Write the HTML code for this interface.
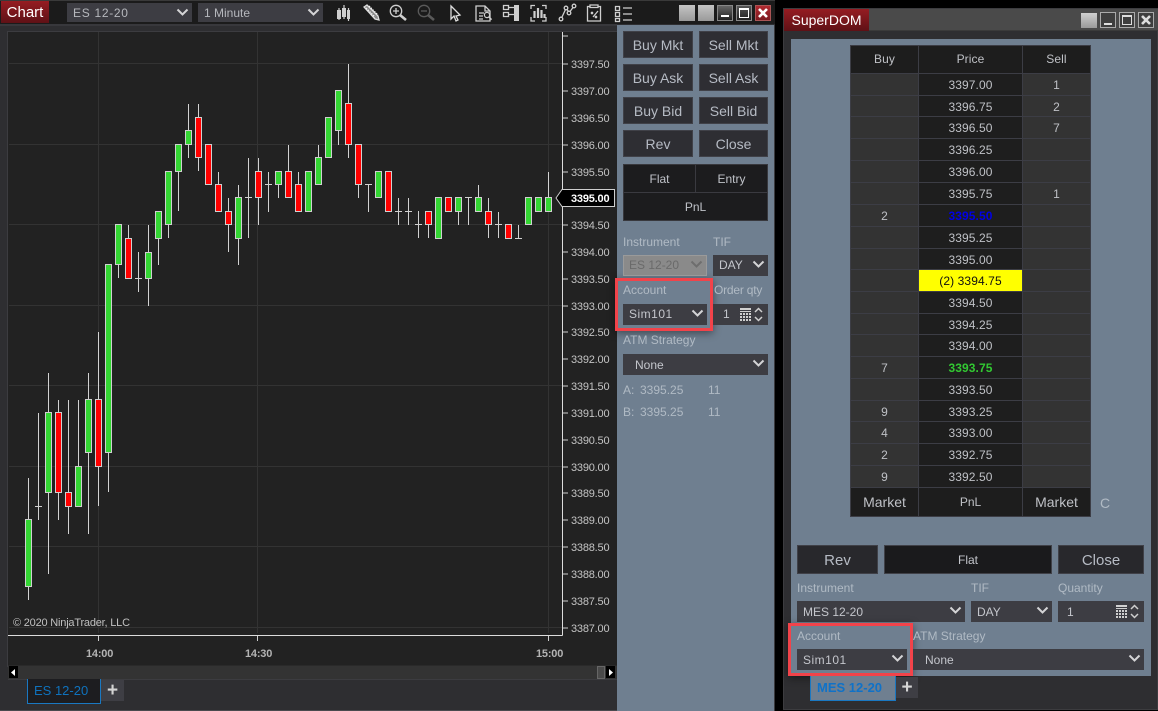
<!DOCTYPE html>
<html><head><meta charset="utf-8"><style>
html,body{margin:0;padding:0;background:#000}
body{position:relative;width:1158px;height:711px;overflow:hidden;font-family:"Liberation Sans",sans-serif;font-size:12px;color:#b9bdc4}
div,span{box-sizing:border-box}
.a{position:absolute}
.t{position:absolute;white-space:nowrap;line-height:16px;height:16px}
.lab{color:#b0bac4;font-size:12px}
.ax{position:absolute;left:571px;margin-top:1px;font-size:11px;letter-spacing:-.2px;line-height:14px;color:#c4c4c4}
.btn{position:absolute;background:#2e2e33;border:1px solid #404148;color:#b6bbc4;font-size:14px;text-align:center;line-height:26px;height:27px}
.sel{position:absolute;background:#3d3d43;color:#c4c6cc;height:21px;line-height:21px;padding-left:6px;font-size:12px}
.sel svg{position:absolute;right:3px;top:5px}
.grid{position:absolute;left:850px;top:45px;width:241px;display:grid;background:#3c3d45;border:1px solid #3c3d45;grid-template-columns:67px 103px 67px;column-gap:1px;row-gap:1px;grid-template-rows:27px 21px 20px 21px 21px 21px 21px 21px 21px 20px 21px 21px 20px 21px 21px 21px 20px 21px 21px 21px 28px}
.grid div{text-align:center;font-size:12px;letter-spacing:.1px;line-height:22px;color:#bfc1c6;background:#333}
.grid div.p{background:#1e1e1e}
.grid div.h{background:#1d1d1d;line-height:26px}
.grid div.m{background:#1d1d1d;font-size:14px;line-height:29px;letter-spacing:0}
.hl{position:absolute;border:3px solid #f2434a;box-shadow:0 2px 8px rgba(0,0,0,.45)}
.time{color:#b4b4b4;font-weight:bold;font-size:11px;letter-spacing:-.2px;top:646px}
</style></head><body>

<!-- CHART WINDOW -->
<div class="a" style="left:0;top:0;width:775px;height:711px;background:#2e2e31;border-bottom:1px solid #4a4a4e"></div>
<div class="a" style="left:0;top:0;width:775px;height:24px;background:#1b1b1b;border-top:1px solid #3a3a3a"></div>
<div class="a" style="left:0;top:24px;width:617px;height:2px;background:#38383c"></div>
<div class="a" style="left:1px;top:1px;width:48px;height:22px;background:linear-gradient(#951c22,#5f1116);color:#fff;font-size:15px;line-height:24px;text-align:center">Chart</div>
<div class="sel" style="left:67px;top:3px;width:125px;height:19px;line-height:21px;color:#b6b8bd;letter-spacing:.7px"><span>ES 12-20</span><svg width="13" height="9" style="top:5px"><path d="M1.500 1.500l5 5 5-5" fill="none" stroke="#d4d4d6" stroke-width="2"/></svg></div>
<div class="sel" style="left:198px;top:3px;width:125px;height:19px;line-height:21px;color:#b6b8bd"><span>1 Minute</span><svg width="13" height="9" style="top:5px"><path d="M1.500 1.500l5 5 5-5" fill="none" stroke="#d4d4d6" stroke-width="2"/></svg></div>

<!-- toolbar icons -->
<svg class="a" style="left:330px;top:0" width="310" height="24" fill="none" stroke="#cfcfcf" stroke-width="1.3">
<path d="M9 8v12M14 5v14M18.500 8v13" stroke-width="1.200"/><path d="M7 10h4v9H7zM12 8h4v9h-4zM17 10h3v9h-3z" fill="#cfcfcf" stroke="none"/>
<path d="M34 7l3-2 11 11 1 4-4-1z" fill="#888" stroke="#ddd"/><path d="M36 8l9 9M39 6l9 9" stroke="#eee" stroke-dasharray="1.500 1"/>
<circle cx="66" cy="11" r="5.700"/><path d="M63 11h6M66 8v6"/><path d="M70 15l6 5" stroke-width="2.600"/>
<g stroke="#5a5a5a"><circle cx="94" cy="11" r="5.700"/><path d="M91 11h6"/><path d="M98 15l6 5" stroke-width="2.600"/></g>
<path d="M121 6l0 13 3-3 2 5 2-1-2-4 4-1z" stroke="#ddd"/>
<path d="M146 6h9l5 5v10h-14zM155 6v5h5M149 13h5M149 16h4M149 19h4"/><circle cx="157" cy="15" r="2.600" stroke-width="1.200"/><path d="M159 17l2.600 2.600" stroke-width="1.500"/>
<path d="M173.500 5.500h5v4h-5zM173.500 12.500h5v4h-5zM178 7.500h6M178 14.500h6"/><path d="M184 5h5v16h-5z" fill="#cfcfcf" stroke="none"/>
<path d="M201 9V5.500h4M212 5.500h4V9M201 17v4h4M212 21h4v-4"/><path d="M204.500 11v7M208 8v10M211.500 10v8M214.500 14v4" stroke-width="2.200"/>
<circle cx="231" cy="19" r="1.800"/><circle cx="236" cy="8" r="1.800"/><circle cx="239" cy="13" r="1.800"/><circle cx="244" cy="6" r="1.800"/><path d="M232 17l3.500-7.500M237 9.500l1.500 2M240 11.500l3-4"/>
<path d="M260 6.500h-2.500v14.500h13v-14.500h-2.500M260 5h8v2.500h-8zM261 12l2 2M263 12l-2 2M265 16l2 2M267 16l-2 2M263 17l5-6"/>
<path d="M285.500 6.500h4v4h-4zM285.500 12.500h4v4h-4zM285.500 18.500h4v3h-4zM293 8h9M293 14h9M293 20h9"/>
</svg>
<!-- window buttons -->
<div class="a" style="left:679px;top:5px;width:16px;height:16px;background:linear-gradient(#c4c4c4,#9a9a9a)"></div>
<div class="a" style="left:698px;top:5px;width:16px;height:16px;background:linear-gradient(#c4c4c4,#9a9a9a)"></div>
<div class="a" style="left:717px;top:5px;width:16px;height:16px;background:linear-gradient(#666,#222);border:1px solid #888"><div class="a" style="left:3px;top:9px;width:8px;height:2px;background:#fff"></div></div>
<div class="a" style="left:736px;top:5px;width:16px;height:16px;background:linear-gradient(#555,#222);border:1px solid #888"><div class="a" style="left:2px;top:2px;width:10px;height:10px;border:1px solid #fff;border-top-width:2px"></div></div>
<div class="a" style="left:755px;top:5px;width:16px;height:16px;background:linear-gradient(#b02a30,#7c1a20);border:1px solid #a55"><svg width="14" height="14" class="a" style="left:0;top:0"><path d="M3 3l8 8M11 3l-8 8" stroke="#fff" stroke-width="2.600"/></svg></div>

<!-- chart area -->
<div class="a" style="left:7px;top:31px;width:610px;height:636px;background:#222;border-left:1px solid #3c3c40;border-top:1px solid #3c3c40"></div>
<svg class="a" style="left:0;top:0" width="620" height="670" fill="none">
<path d="M9 63.500H562M9 144.500H562M9 224.500H562M9 305.500H562M9 385.500H562M9 466.500H562M9 546.500H562M9 627.500H562M98.500 32V633M257.500 32V633M548.500 32V633" stroke="#333"/>
<path d="M562.500 32V635.500M8 635.500H562.500" stroke="#dcdcdc"/>
<path d="M98.500 636v5M257.500 636v5M548.500 636v5M563 36h5M563 64h5M563 91h5M563 118h5M563 145h5M563 172h5M563 225h5M563 252h5M563 279h5M563 306h5M563 332h5M563 359h5M563 386h5M563 413h5M563 440h5M563 467h5M563 493h5M563 520h5M563 547h5M563 574h5M563 601h5M563 628h5" stroke="#cfcfcf"/>
<path stroke="#d2d2d2" d="M28.500 478V600M38.500 413V520M35 506.500h7M48.500 373V574M58.500 400V520M68.500 400V534M78.500 400V506M88.500 373V534M98.500 332V506M108.500 264V492M118.500 224V278M128.500 225V278M138.500 252V292M135 278.500h7M148.500 225V306M158.500 211V265M168.500 171V238M178.500 144V211M188.500 104V158M198.500 104V171M218.500 172V211M228.500 198V252M238.500 185V265M248.500 158V238M245 197.500h7M258.500 158V225M268.500 172V212M265 184.500h7M278.500 171V198M288.500 145V197M298.500 172V211M318.500 145V184M338.500 90V145M348.500 64V158M358.500 144V198M368.500 184V212M365 184.500h7M398.500 198V225M395 211.500h7M408.500 198V225M405 211.500h7M418.500 211V238M415 224.500h7M428.500 211V238M458.500 197V225M468.500 197V225M465 197.500h7M478.500 185V211M488.500 198V238M498.500 212V238M495 224.500h7M518.500 225V238M515 238.500h7M548.500 172V211"/>
<path fill="#33d633" stroke="#d0d0d0" d="M25.500 519.500h6v67h-6zM45.500 412.500h6v80h-6zM75.500 466.500h6v40h-6zM85.500 399.500h6v53h-6zM105.500 264.500h6v188h-6zM115.500 224.500h6v40h-6zM145.500 252.500h6v26h-6zM155.500 211.500h6v27h-6zM165.500 171.500h6v53h-6zM175.500 144.500h6v27h-6zM185.500 130.500h6v14h-6zM235.500 197.500h6v41h-6zM275.500 171.500h6v13h-6zM305.500 171.500h6v40h-6zM315.500 157.500h6v27h-6zM325.500 117.500h6v40h-6zM335.500 90.500h6v40h-6zM375.500 171.500h6v26h-6zM435.500 197.500h6v41h-6zM455.500 197.500h6v14h-6zM475.500 197.500h6v14h-6zM525.500 197.500h6v27h-6zM535.500 197.500h6v14h-6zM545.500 197.500h6v14h-6z"/>
<path fill="#ff0000" stroke="#d0d0d0" d="M55.500 412.500h6v80h-6zM65.500 492.500h6v14h-6zM95.500 399.500h6v67h-6zM125.500 238.500h6v40h-6zM195.500 117.500h6v40h-6zM205.500 144.500h6v40h-6zM215.500 184.500h6v27h-6zM225.500 211.500h6v13h-6zM255.500 171.500h6v26h-6zM285.500 171.500h6v26h-6zM295.500 184.500h6v27h-6zM345.500 103.500h6v41h-6zM355.500 144.500h6v40h-6zM385.500 171.500h6v40h-6zM425.500 211.500h6v13h-6zM445.500 197.500h6v14h-6zM485.500 211.500h6v13h-6zM505.500 224.500h6v14h-6z"/>
<path d="M556 198l6-8.500h52.500v17H562z" fill="#000" stroke="#cfcfcf"/>
</svg>
<div class="ax" style="top:57px">3397.50</div><div class="ax" style="top:84px">3397.00</div><div class="ax" style="top:111px">3396.50</div><div class="ax" style="top:138px">3396.00</div><div class="ax" style="top:165px">3395.50</div>
<div class="ax" style="top:191px;color:#fff;font-weight:bold">3395.00</div>
<div class="ax" style="top:218px">3394.50</div><div class="ax" style="top:245px">3394.00</div><div class="ax" style="top:272px">3393.50</div><div class="ax" style="top:299px">3393.00</div><div class="ax" style="top:325px">3392.50</div><div class="ax" style="top:352px">3392.00</div><div class="ax" style="top:379px">3391.50</div><div class="ax" style="top:406px">3391.00</div><div class="ax" style="top:433px">3390.50</div><div class="ax" style="top:460px">3390.00</div><div class="ax" style="top:486px">3389.50</div><div class="ax" style="top:513px">3389.00</div><div class="ax" style="top:540px">3388.50</div><div class="ax" style="top:567px">3388.00</div><div class="ax" style="top:594px">3387.50</div><div class="ax" style="top:621px">3387.00</div>
<div class="t" style="left:13px;top:615px;font-size:11px;letter-spacing:-.2px;color:#c0c0c0">© 2020 NinjaTrader, LLC</div>
<div class="t time" style="left:86px">14:00</div>
<div class="t time" style="left:245px">14:30</div>
<div class="t time" style="left:536px">15:00</div>
<!-- scrollbar -->
<div class="a" style="left:8px;top:665px;width:609px;height:15px;background:#333;border-top:1px solid #2a2a2a;border-bottom:1px solid #3c3c40"></div>
<div class="a" style="left:9px;top:666px;width:9px;height:12px;background:#000"></div>
<svg class="a" style="left:11px;top:669px" width="5" height="7"><path d="M4 0v7L0 3.500z" fill="#fff"/></svg>
<div class="a" style="left:597px;top:666px;width:8px;height:13px;background:#4a4a4a;border:1px solid #666"></div>
<div class="a" style="left:606px;top:666px;width:9px;height:12px;background:#000"></div>
<svg class="a" style="left:609px;top:669px" width="5" height="7"><path d="M0 0v7l4-3.500z" fill="#fff"/></svg>
<!-- tab -->
<div class="a" style="left:27px;top:679px;width:74px;height:25px;background:#1d1d20;border:1px solid #1a78c2;border-top:none;color:#0f72bd;font-size:13px;line-height:23px;padding-left:6px;white-space:nowrap">ES 12-20</div>
<div class="a" style="left:101px;top:680px;width:23px;height:21px;background:#3e3e44;color:#d4d4d4;font-size:19px;line-height:22px;text-align:center;font-weight:bold">+</div>

<!-- chart right panel -->
<div class="a" style="left:617px;top:25px;width:158px;height:686px;background:#6f7f90;border-right:1px solid #3a3a3e"></div>
<div class="btn" style="left:623px;top:31px;width:70px">Buy Mkt</div><div class="btn" style="left:699px;top:31px;width:69px">Sell Mkt</div>
<div class="btn" style="left:623px;top:64px;width:70px">Buy Ask</div><div class="btn" style="left:699px;top:64px;width:69px">Sell Ask</div>
<div class="btn" style="left:623px;top:97px;width:70px">Buy Bid</div><div class="btn" style="left:699px;top:97px;width:69px">Sell Bid</div>
<div class="btn" style="left:623px;top:130px;width:70px">Rev</div><div class="btn" style="left:699px;top:130px;width:69px">Close</div>
<div class="a" style="left:623px;top:164px;width:145px;height:57px;background:#1c1c1e;border:1px solid #38383d"></div>
<div class="a" style="left:624px;top:192px;width:143px;height:1px;background:#3a3a40"></div>
<div class="a" style="left:695px;top:165px;width:1px;height:27px;background:#3a3a40"></div>
<div class="t" style="left:624px;top:171px;width:71px;text-align:center;color:#bfc2c8">Flat</div>
<div class="t" style="left:696px;top:171px;width:71px;text-align:center;color:#bfc2c8">Entry</div>
<div class="t" style="left:624px;top:199px;width:143px;text-align:center;color:#bfc2c8">PnL</div>

<div class="hl" style="left:615px;top:278px;width:98px;height:53px"></div>
<div class="t lab" style="left:623px;top:234px">Instrument</div><div class="t lab" style="left:713px;top:234px">TIF</div>
<div class="sel" style="left:623px;top:255px;width:84px;background:#8a8a8a;border:1px solid #9a9a9a;color:#6a6a6a;line-height:19px;padding-left:5px">ES 12-20<svg width="13" height="9" style="top:4px"><path d="M1.500 1.500l5 5 5-5" fill="none" stroke="#6e6e6e" stroke-width="2"/></svg></div>
<div class="sel" style="left:713px;top:255px;width:55px">DAY<svg width="13" height="9"><path d="M1.500 1.500l5 5 5-5" fill="none" stroke="#d4d4d6" stroke-width="2"/></svg></div>
<div class="t lab" style="left:623px;top:282px">Account</div><div class="t lab" style="left:714px;top:282px;letter-spacing:-.2px">Order qty</div>
<div class="sel" style="left:623px;top:304px;width:84px;letter-spacing:.5px">Sim101<svg width="13" height="9"><path d="M1.500 1.500l5 5 5-5" fill="none" stroke="#d4d4d6" stroke-width="2"/></svg></div>
<div class="sel" style="left:713px;top:304px;width:55px;padding-left:10px">1
<svg width="30" height="21" style="right:0;top:0"><path d="M2 4h11v2H2zM2 7h11v1H2z" fill="#d0d0d0"/><path d="M2 9h2v2H2zM5 9h2v2H5zM8 9h2v2H8zM11 9h2v2h-2zM2 12h2v2H2zM5 12h2v2H5zM8 12h2v2H8zM11 12h2v2h-2zM2 15h2v2H2zM5 15h2v2H5zM8 15h2v2H8zM11 15h2v2h-2z" fill="#d0d0d0"/><path d="M17 8l3.500-3.500 3.500 3.500M17 13l3.500 3.500 3.500-3.500" fill="none" stroke="#d0d0d0" stroke-width="1.500"/></svg></div>
<div class="t lab" style="left:623px;top:332px">ATM Strategy</div>
<div class="sel" style="left:623px;top:354px;width:145px;padding-left:12px;line-height:23px">None<svg width="13" height="9"><path d="M1.500 1.500l5 5 5-5" fill="none" stroke="#d4d4d6" stroke-width="2"/></svg></div>
<div class="t lab" style="left:623px;top:382px">A:</div><div class="t lab" style="left:640px;top:382px">3395.25</div><div class="t lab" style="left:708px;top:382px">11</div>
<div class="t lab" style="left:623px;top:404px">B:</div><div class="t lab" style="left:640px;top:404px">3395.25</div><div class="t lab" style="left:708px;top:404px">11</div>

<!-- SUPERDOM WINDOW -->
<div class="a" style="left:783px;top:8px;width:375px;height:702px;background:#2e2e31;border:1px solid #3c3c3f"></div>
<div class="a" style="left:784px;top:9px;width:374px;height:22px;background:#4a4a4a;border-bottom:1px solid #3a3a3a"></div>
<div class="a" style="left:784px;top:9px;width:85px;height:22px;background:linear-gradient(#951c22,#5f1116);color:#fff;font-size:14px;line-height:22px;text-align:center">SuperDOM</div>
<div class="a" style="left:1081px;top:13px;width:16px;height:15px;background:linear-gradient(#d0d0d0,#9a9a9a)"></div>
<div class="a" style="left:1100px;top:12px;width:16px;height:16px;background:#3e3e3e;border:1px solid #aaa"><div class="a" style="left:3px;top:10px;width:8px;height:2px;background:#ddd"></div></div>
<div class="a" style="left:1119px;top:12px;width:16px;height:16px;background:#3e3e3e;border:1px solid #aaa"><div class="a" style="left:2px;top:2px;width:10px;height:10px;border:1px solid #ddd;border-top-width:2px"></div></div>
<div class="a" style="left:1138px;top:12px;width:16px;height:16px;background:#3e3e3e;border:1px solid #aaa"><svg width="14" height="14" class="a" style="left:0;top:0"><path d="M3 3l8 8M11 3l-8 8" stroke="#ddd" stroke-width="2.600"/></svg></div>
<div class="a" style="left:791px;top:39px;width:360px;height:637px;background:#6f7f90"></div>

<div class="grid">
<div class="h">Buy</div><div class="h">Price</div><div class="h">Sell</div>
<div></div><div class="p">3397.00</div><div>1</div>
<div></div><div class="p">3396.75</div><div>2</div>
<div></div><div class="p">3396.50</div><div>7</div>
<div></div><div class="p">3396.25</div><div></div>
<div></div><div class="p">3396.00</div><div></div>
<div></div><div class="p">3395.75</div><div>1</div>
<div>2</div><div class="p" style="color:#0000e6;font-weight:bold">3395.50</div><div></div>
<div></div><div class="p">3395.25</div><div></div>
<div></div><div class="p">3395.00</div><div></div>
<div></div><div class="p" style="background:#ffff00;color:#111">(2) 3394.75</div><div></div>
<div></div><div class="p">3394.50</div><div></div>
<div></div><div class="p">3394.25</div><div></div>
<div></div><div class="p">3394.00</div><div></div>
<div>7</div><div class="p" style="color:#32c832;font-weight:bold">3393.75</div><div></div>
<div></div><div class="p">3393.50</div><div></div>
<div>9</div><div class="p">3393.25</div><div></div>
<div>4</div><div class="p">3393.00</div><div></div>
<div>2</div><div class="p">3392.75</div><div></div>
<div>9</div><div class="p">3392.50</div><div></div>
<div class="m">Market</div><div class="m" style="font-size:12px">PnL</div><div class="m">Market</div>
</div>
<div class="t" style="left:1100px;top:495px;font-size:14px;color:#b0bac4">C</div>

<div class="btn" style="left:797px;top:545px;width:81px;height:29px;line-height:29px;background:#28282c;font-size:15px">Rev</div>
<div class="btn" style="left:884px;top:545px;width:168px;height:29px;line-height:29px;background:#1a1a1c;font-size:12px;color:#c4c6cc">Flat</div>
<div class="btn" style="left:1058px;top:545px;width:86px;height:29px;line-height:29px;background:#28282c;font-size:15px">Close</div>
<div class="t lab" style="left:797px;top:580px">Instrument</div><div class="t lab" style="left:971px;top:580px">TIF</div><div class="t lab" style="left:1058px;top:580px">Quantity</div>
<div class="sel" style="left:797px;top:601px;width:168px;line-height:23px">MES 12-20<svg width="13" height="9"><path d="M1.500 1.500l5 5 5-5" fill="none" stroke="#d4d4d6" stroke-width="2"/></svg></div>
<div class="sel" style="left:971px;top:601px;width:81px;line-height:23px">DAY<svg width="13" height="9"><path d="M1.500 1.500l5 5 5-5" fill="none" stroke="#d4d4d6" stroke-width="2"/></svg></div>
<div class="sel" style="left:1058px;top:601px;width:86px;padding-left:9px;line-height:23px">1
<svg width="30" height="21" style="right:0;top:0"><path d="M2 4h11v2H2zM2 7h11v1H2z" fill="#d0d0d0"/><path d="M2 9h2v2H2zM5 9h2v2H5zM8 9h2v2H8zM11 9h2v2h-2zM2 12h2v2H2zM5 12h2v2H5zM8 12h2v2H8zM11 12h2v2h-2zM2 15h2v2H2zM5 15h2v2H5zM8 15h2v2H8zM11 15h2v2h-2z" fill="#d0d0d0"/><path d="M17 8l3.500-3.500 3.500 3.500M17 13l3.500 3.500 3.500-3.500" fill="none" stroke="#d0d0d0" stroke-width="1.500"/></svg></div>

<div class="hl" style="left:788px;top:623px;width:125px;height:53px"></div>
<div class="t lab" style="left:797px;top:628px">Account</div><div class="t lab" style="left:913px;top:628px">ATM Strategy</div>
<div class="sel" style="left:797px;top:649px;width:110px;line-height:23px;letter-spacing:.5px">Sim101<svg width="13" height="9"><path d="M1.500 1.500l5 5 5-5" fill="none" stroke="#d4d4d6" stroke-width="2"/></svg></div>
<div class="sel" style="left:913px;top:649px;width:231px;padding-left:12px;line-height:23px">None<svg width="13" height="9"><path d="M1.500 1.500l5 5 5-5" fill="none" stroke="#d4d4d6" stroke-width="2"/></svg></div>
<div class="a" style="left:810px;top:676px;width:86px;height:25px;background:#6f7f90;border:1px solid #1a78c2;border-top:none;color:#0f72c8;font-size:13px;font-weight:bold;line-height:23px;padding-left:6px;white-space:nowrap">MES 12-20</div>
<div class="a" style="left:896px;top:677px;width:22px;height:21px;background:#3e3e44;color:#d4d4d4;font-size:19px;line-height:22px;text-align:center;font-weight:bold">+</div>
</body></html>
